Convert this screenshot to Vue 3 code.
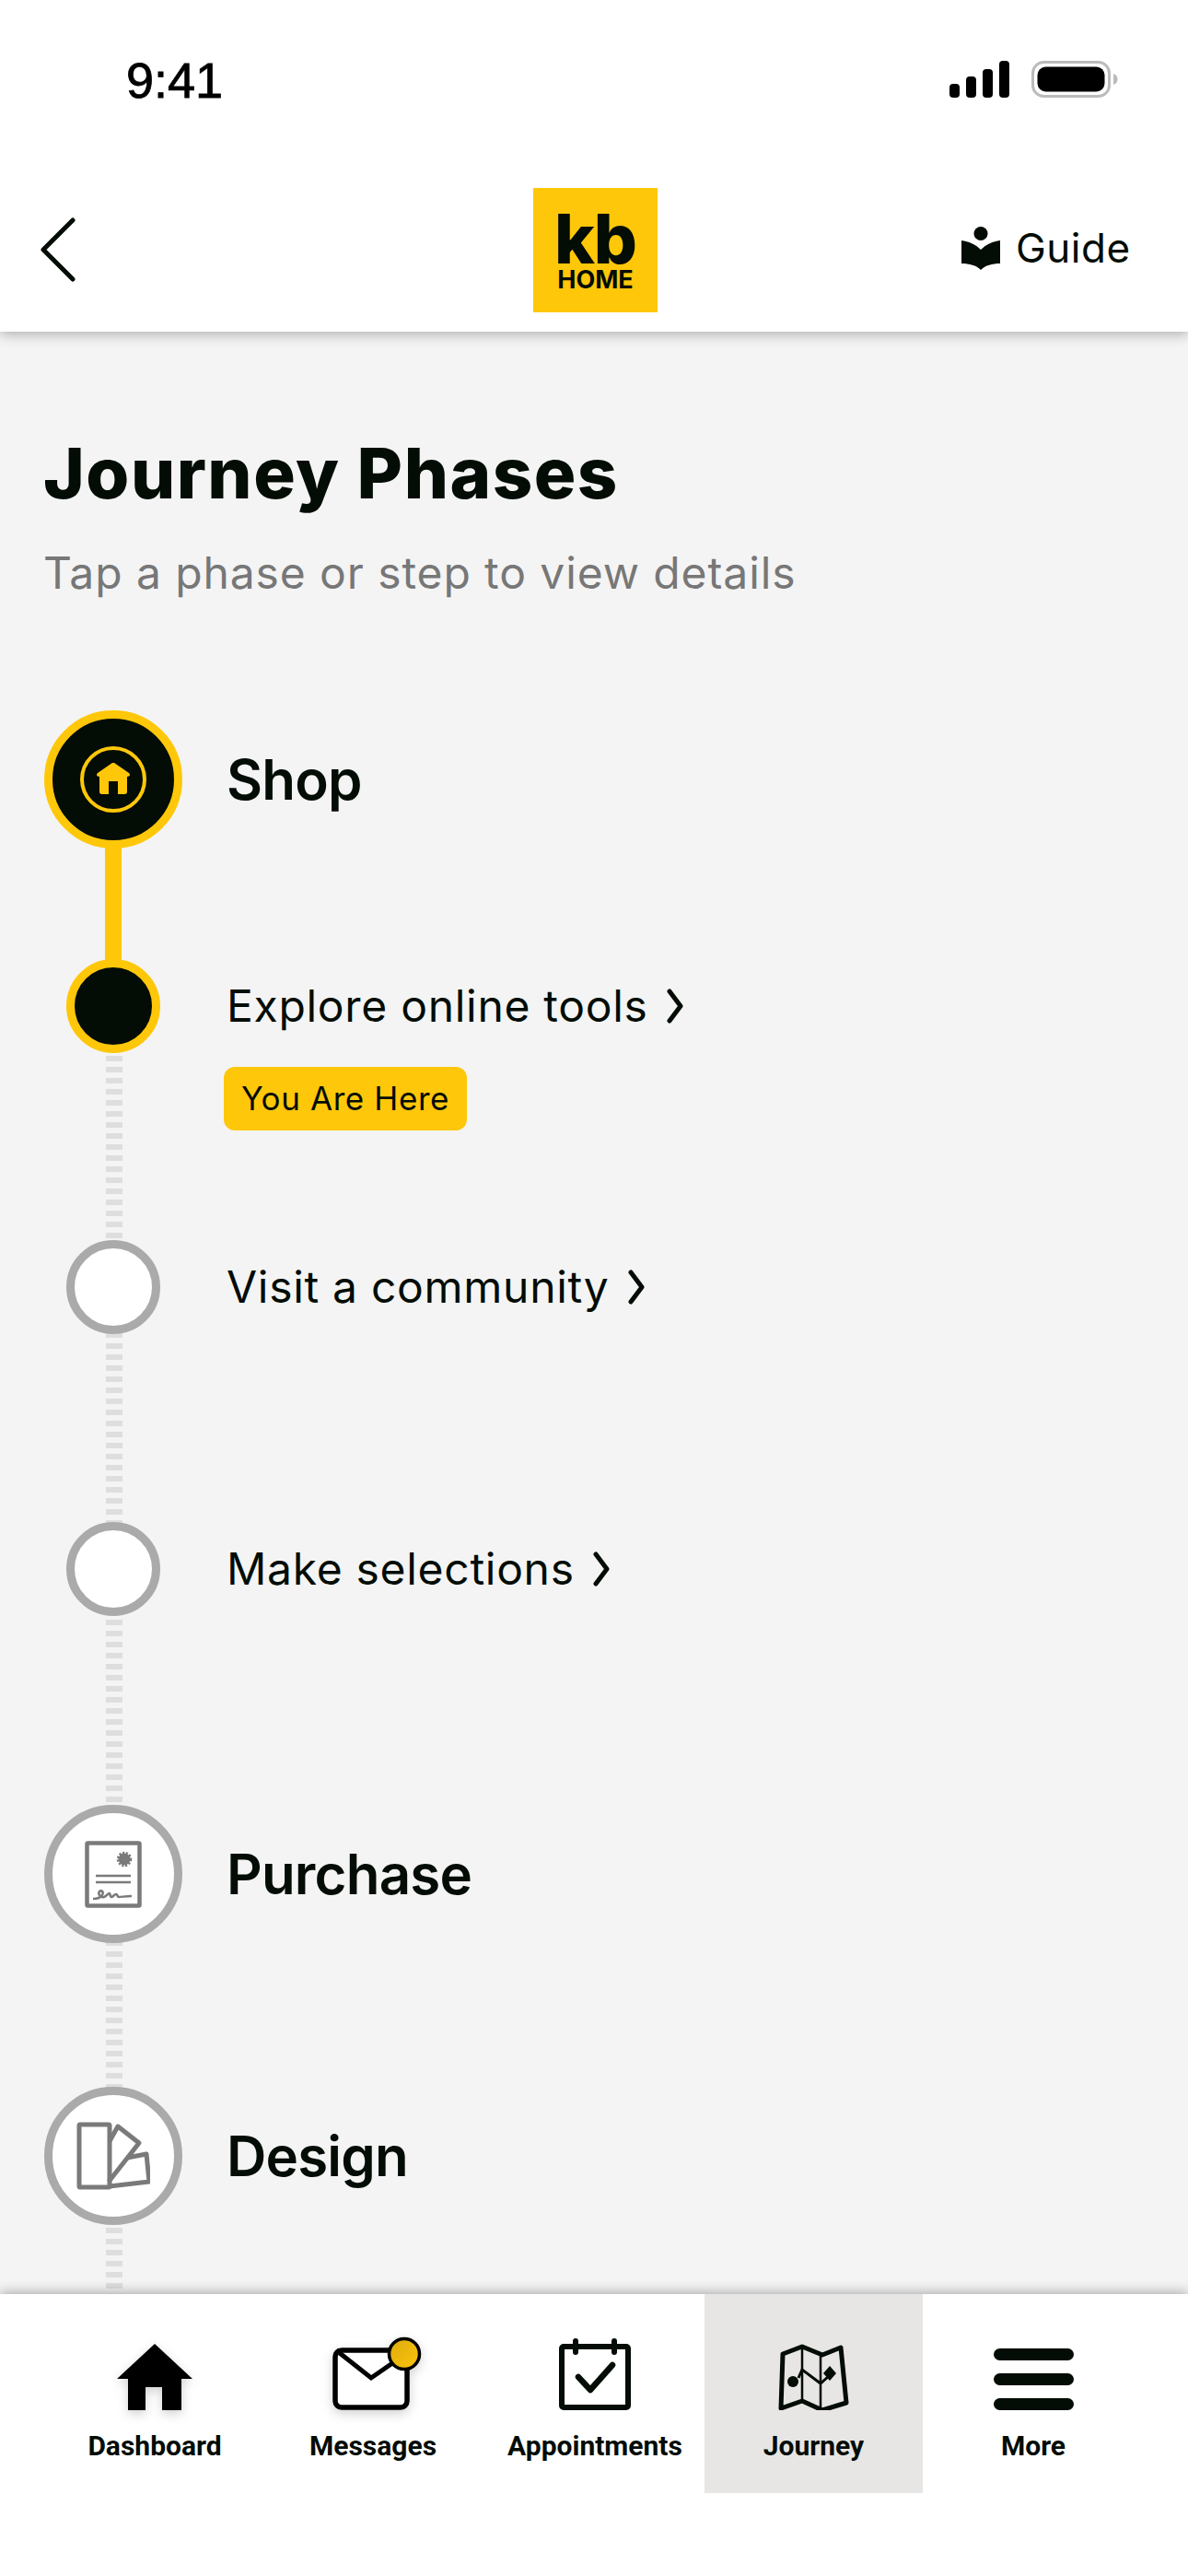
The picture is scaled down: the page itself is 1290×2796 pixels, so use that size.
<template>
  <div class="screen">
    <header class="top">
      <div class="status">
        <span class="time">9:41</span>
        <div class="status-icons">
          <svg class="signal" width="65" height="40" viewBox="0 0 65 40">
            <rect x="0" y="25" width="11" height="15" rx="4" />
            <rect x="18" y="17" width="11" height="23" rx="4" />
            <rect x="36" y="9" width="11" height="31" rx="4" />
            <rect x="54" y="0" width="11" height="40" rx="4" />
          </svg>
          <svg class="battery" width="94" height="40" viewBox="0 0 94 40">
            <rect x="1.500" y="1.500" width="83" height="37" rx="12" fill="none" stroke="#bbb" stroke-width="3" />
            <rect x="6.500" y="6.500" width="73" height="27" rx="9" fill="#000" />
            <path d="M89 14c3 1 4.500 3 4.500 6s-1.500 5-4.500 6z" fill="#bbb" />
          </svg>
        </div>
      </div>
      <div class="bar">
        <svg class="back" width="40" height="70" viewBox="0 0 40 70">
          <path d="M37 3 5 35l32 32" fill="none" stroke="#030c05" stroke-width="5" stroke-linecap="round" stroke-linejoin="round" />
        </svg>
        <div class="logo">
          <span class="logo-kb">kb</span>
          <span class="logo-home">HOME</span>
        </div>
        <div class="guide">
          <svg width="42" height="47" viewBox="0 0 42 47">
            <circle cx="21" cy="7.500" r="7.500" fill="#030c05" />
            <path d="M0 15c8 1 15 4 21 10 6-6 13-9 21-10v25c-9 0-16 2-21 7-5-5-12-7-21-7z" fill="#030c05" />
          </svg>
          <span>Guide</span>
        </div>
      </div>
    </header>

    <main class="content">
      <h1 class="title">Journey Phases</h1>
      <p class="subtitle">Tap a phase or step to view details</p>

      <div class="timeline">
        <div class="rail-done"></div>
        <div class="rail"></div>
        <div
          v-for="row in rows"
          :key="row.label"
          class="row"
          :class="row.big ? 'row-phase' : 'row-step'"
          :style="{ height: row.height + 'px' }"
        >
          <div class="marker-col">
            <div class="dot" :class="{ 'dot-big': row.big, 'dot-on': row.on }">
              <div v-if="row.icon === 'home'" class="ring">
                <svg width="36" height="34" viewBox="0 0 36 34">
                  <path d="M18 0c1 0 1.500.4 2.500 1L35 11c1.300 1 1.300 3 0 3.500l-2 .5v16.500c0 1.500-1 2.500-2.500 2.500H23V20H13v14H5.500C4 34 3 33 3 31.500V15l-2-.5C-.3 14-.3 12 1 11L15.500 1c1-.6 1.500-1 2.500-1z" fill="#ffc709" />
                </svg>
              </div>
              <svg v-else-if="row.icon === 'doc'" width="62" height="73" viewBox="0 0 62 73" fill="none" stroke="#7a7a7a">
                <rect x="2.500" y="2.500" width="57" height="68" rx="1" stroke-width="4.500" />
                <circle cx="43" cy="20" r="6.500" fill="#7a7a7a" stroke-width="3.500" stroke-dasharray="2 1.500" />
                <path d="M12 38h38M12 45h38" stroke-width="2.500" />
                <path d="M9 63c5 0 8-1 10-4 2-4-1-6-3-4-2 3 1 7 5 6 3-1 4-4 6-4 1 0 0 4 2 4s3-3 5-3 1 3 3 3c3 0 8-1 14-1" stroke-width="2.500" />
              </svg>
              <svg v-else-if="row.icon === 'swatch'" width="80" height="74" viewBox="0 0 80 74" fill="none" stroke="#7a7a7a" stroke-width="5" stroke-linejoin="round">
                <rect x="3" y="3" width="33" height="68" rx="1" />
                <path d="M36 21 45 5l23 18-33 42" />
                <path d="M55 39l21-4 3 30-43 5" />
              </svg>
            </div>
          </div>
          <div class="row-text">
            <div class="row-label">
              <span>{{ row.label }}</span>
              <svg v-if="!row.big" class="chev" width="18" height="38" viewBox="0 0 18 38">
                <path d="M3 3l12 16L3 35" fill="none" stroke="#030c05" stroke-width="5" stroke-linecap="round" stroke-linejoin="round" />
              </svg>
            </div>
            <span v-if="row.here" class="here">You Are Here</span>
          </div>
        </div>
      </div>
    </main>

    <nav class="tabs">
      <div v-for="tab in tabs" :key="tab" class="tab" :class="{ 'tab-on': tab === 'Journey', 'tab-appt': tab === 'Appointments' }">
        <div class="tab-icon">
          <svg v-if="tab === 'Dashboard'" class="shadowed" width="82" height="72" viewBox="0 0 82 72">
            <path d="M41 0l41 38H70v34H49V47H31v25H12V38H0z" fill="#000" />
          </svg>
          <svg v-else-if="tab === 'Messages'" class="shadowed envelope" width="104" height="84" viewBox="0 0 104 84">
            <defs>
              <linearGradient id="badgeFill" x1="0" y1="0" x2="1" y2="1">
                <stop offset="0" stop-color="#dcab10" />
                <stop offset="1" stop-color="#fdc509" />
              </linearGradient>
            </defs>
            <rect x="3" y="19" width="78" height="62" rx="7" fill="#fff" stroke="#000" stroke-width="5.500" />
            <path d="M4 19l38 30 26-18" fill="none" stroke="#000" stroke-width="5" />
            <circle cx="78" cy="23" r="16.500" fill="url(#badgeFill)" stroke="#000" stroke-width="3.500" />
          </svg>
          <svg v-else-if="tab === 'Appointments'" width="78" height="78" viewBox="0 0 78 78" fill="none" stroke="#030c05">
            <rect x="3" y="9" width="72" height="66" rx="2" stroke-width="6" />
            <path d="M18 3v12M60 3v12" stroke-width="6" stroke-linecap="round" />
            <path d="M21 42l13 14 24-27" stroke-width="6.500" stroke-linecap="round" stroke-linejoin="round" />
          </svg>
          <svg v-else-if="tab === 'Journey'" width="78" height="72" viewBox="0 0 78 72" fill="none" stroke="#030c05">
            <path d="M5 11 26 3l22 9 20-8 6 60-26 8-22-10L3 70z" stroke-width="5" stroke-linejoin="round" />
            <path d="M26 3v58M46 12v58" stroke-width="2.500" />
            <path d="M22 37l4-9 20 15 9-8" stroke-width="3" />
            <circle cx="16" cy="41" r="6" fill="#030c05" stroke="none" />
            <path d="M56 24l7 8-7 8-7-8z" fill="#030c05" stroke="none" />
          </svg>
          <div v-else class="burger"><i></i><i></i><i></i></div>
        </div>
        <span class="tab-label">{{ tab }}</span>
      </div>
    </nav>
  </div>
</template>

<script setup>
const rows = [
  { label: 'Shop', big: true, on: true, icon: 'home', height: 270 },
  { label: 'Explore online tools', on: true, here: true, height: 305 },
  { label: 'Visit a community', height: 306 },
  { label: 'Make selections', height: 307 },
  { label: 'Purchase', big: true, icon: 'doc', height: 306 },
  { label: 'Design', big: true, icon: 'swatch', height: 150 },
];

const tabs = ['Dashboard', 'Messages', 'Appointments', 'Journey', 'More'];
</script>

<style>
html, body { margin: 0; background: #fff; }
</style>

<style scoped>
.screen {
  width: 1290px;
  height: 2796px;
  display: flex;
  flex-direction: column;
  overflow: hidden;
  background: #fff;
  color: #030c05;
  font-family: Inter, "Noto Sans", sans-serif;
}

.top {
  position: relative;
  z-index: 2;
  height: 360px;
  flex: none;
  background: #fff;
  box-shadow: 0 2px 14px rgba(0, 0, 0, 0.32);
}
.status {
  height: 204px;
  padding: 66px 76px 0 137px;
  box-sizing: border-box;
  display: flex;
  justify-content: space-between;
  align-items: flex-start;
}
.time {
  font-family: "Liberation Sans", sans-serif;
  font-size: 54px;
  font-weight: 400;
  line-height: 42px;
  color: #000;
  -webkit-text-stroke: 0.8px #000;
}
.status-icons { display: flex; gap: 24px; }
.signal { fill: #000; }

.bar {
  position: relative;
  height: 135px;
  display: flex;
  align-items: center;
  justify-content: center;
}
.back { position: absolute; left: 42px; top: 32px; }
.logo {
  width: 135px;
  height: 135px;
  margin-left: 3px;
  background: #ffc709;
  display: flex;
  flex-direction: column;
  align-items: center;
  font-weight: 800;
}
.logo-kb {
  font-size: 74px;
  line-height: 56px;
  margin-top: 27px;
  letter-spacing: -1px;
}
.logo-home {
  font-size: 27px;
  line-height: 27px;
  font-weight: 700;
  margin-top: 3px;
}
.guide {
  position: absolute;
  left: 1044px;
  top: 42px;
  display: flex;
  align-items: center;
  gap: 17px;
  font-size: 44px;
  line-height: 47px;
  letter-spacing: 0.5px;
}

.content {
  flex: 1;
  min-height: 0;
  display: flex;
  flex-direction: column;
  padding-left: 47px;
  background: #f4f4f4;
  overflow: hidden;
}
.title {
  margin: 108px 0 0;
  font-size: 76px;
  font-weight: 800;
  line-height: 90px;
  letter-spacing: 1.5px;
}
.subtitle {
  margin: 35px 0 0;
  font-size: 48px;
  line-height: 58px;
  letter-spacing: 0.9px;
  color: #777;
}

.timeline {
  position: relative;
  flex: 1;
  margin: 120px 0 0 1px;
}
.rail-done {
  position: absolute;
  left: 66px;
  top: 140px;
  width: 18px;
  height: 140px;
  background: #ffc709;
}
.rail {
  position: absolute;
  left: 67px;
  top: 375px;
  bottom: 0;
  width: 18px;
  background: repeating-linear-gradient(to bottom, #dedede 0 6px, transparent 6px 12px);
}
.row {
  position: relative;
  display: flex;
  gap: 48px;
}
.marker-col {
  width: 150px;
  flex: none;
  display: flex;
  justify-content: center;
}
.dot {
  width: 102px;
  height: 102px;
  box-sizing: border-box;
  border-radius: 50%;
  border: 9px solid #aaa;
  background: #fff;
  display: flex;
  align-items: center;
  justify-content: center;
}
.dot-big { width: 150px; height: 150px; }
.dot-on { border-color: #ffc709; background: #030c05; }
.ring {
  width: 72px;
  height: 72px;
  box-sizing: border-box;
  border: 4.500px solid #ffc709;
  border-radius: 50%;
  display: flex;
  align-items: center;
  justify-content: center;
  padding-bottom: 3px;
}

.row-text { display: flex; flex-direction: column; align-items: flex-start; }
.row-label {
  display: flex;
  align-items: center;
  gap: 20px;
  font-size: 48px;
  line-height: 102px;
  letter-spacing: 0.7px;
}
.row-phase .row-label {
  font-size: 60px;
  font-weight: 600;
  line-height: 150px;
  letter-spacing: -0.8px;
}
.here {
  margin: 15px 0 0 -3px;
  height: 69px;
  width: 264px;
  box-sizing: border-box;
  border-radius: 12px;
  background: #ffc709;
  font-size: 35px;
  line-height: 69px;
  letter-spacing: 0.6px;
  text-align: center;
}

.tabs {
  position: relative;
  z-index: 2;
  height: 306px;
  flex: none;
  box-sizing: border-box;
  padding-left: 48px;
  display: grid;
  grid-template-columns: 240px 234px 243px 237px 240px;
  grid-template-rows: 216px;
  background: #fff;
  box-shadow: 0 -2px 12px rgba(0, 0, 0, 0.3);
}
.tab {
  display: flex;
  flex-direction: column;
  align-items: center;
  font-family: Roboto, sans-serif;
}
.tab-on { background: #e7e6e4; }
.tab-appt { padding-left: 5px; }
.tab-icon {
  height: 80px;
  margin-top: 46px;
  display: flex;
  align-items: flex-end;
  justify-content: center;
}
.tab-label {
  margin-top: 19px;
  font-size: 30px;
  font-weight: 700;
  line-height: 40px;
}
.shadowed { filter: drop-shadow(0 4px 6px rgba(0, 0, 0, 0.18)); overflow: visible; }
.envelope { margin-left: 16px; }
.burger {
  width: 87px;
  height: 67px;
  display: flex;
  flex-direction: column;
  justify-content: space-between;
}
.burger i {
  display: block;
  height: 13px;
  border-radius: 7px;
  background: #030c05;
}
</style>
